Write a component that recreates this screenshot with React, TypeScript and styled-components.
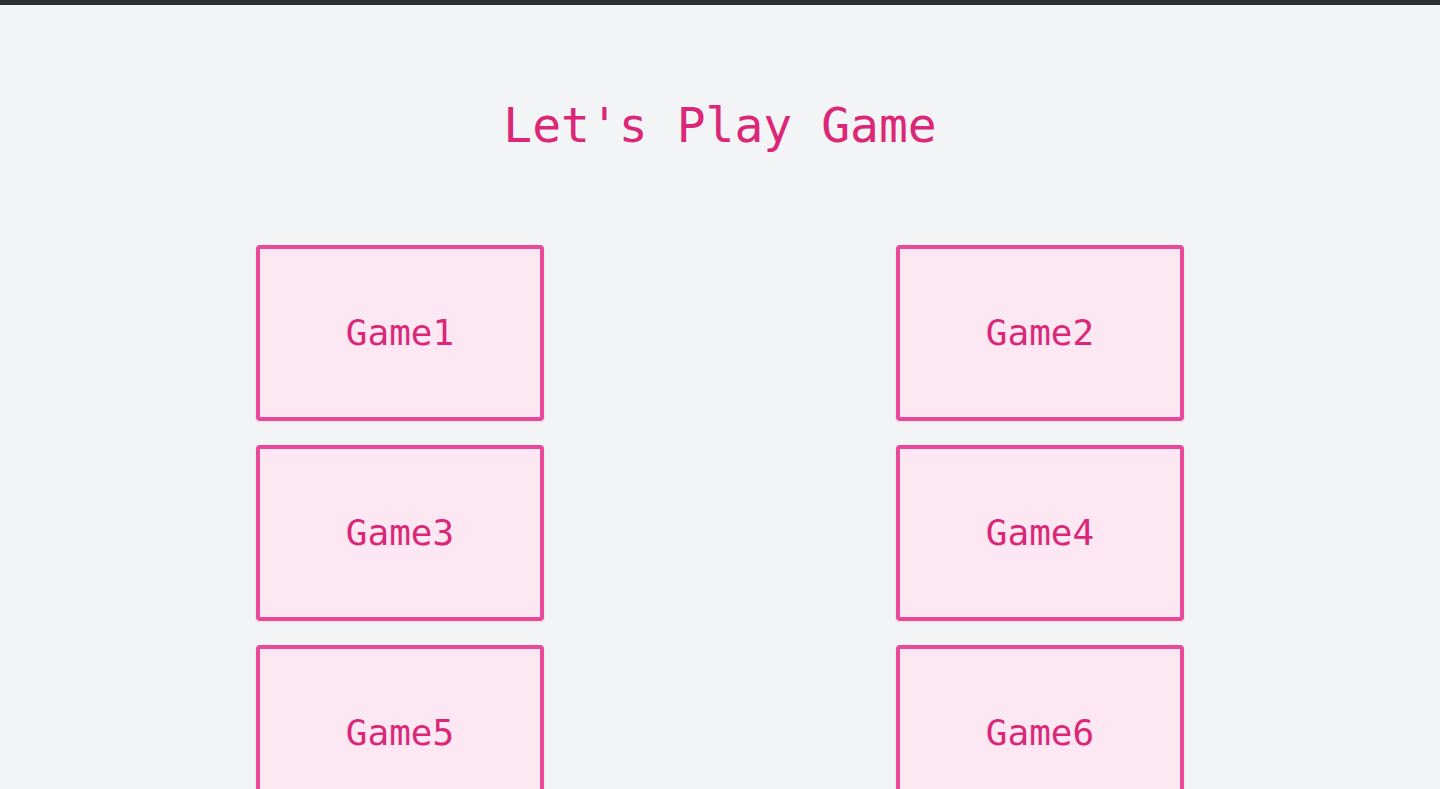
import { FC } from "react";
import styled, { createGlobalStyle } from "styled-components";

const GlobalStyle = createGlobalStyle`
  html, body {
    margin: 0;
    padding: 0;
    background-color: #ffffff;
  }
  * {
    box-sizing: border-box;
  }
`;

const Page = styled.div`
  margin-right: 5px;
  min-height: 100vh;
  background-color: #f3f4f6;
  font-family: "DejaVu Sans Mono", "Liberation Mono", monospace;
  overflow: hidden;
`;

const TopBar = styled.div`
  height: 5px;
  background-color: #2f2f31;
`;

const Title = styled.h1`
  margin: 96px 0 0;
  text-align: center;
  font-size: 48px;
  line-height: 48px;
  font-weight: 400;
  color: #db2777;
`;

const GameGrid = styled.div`
  max-width: 1280px;
  margin: 96px auto 0;
  display: grid;
  grid-template-columns: repeat(2, 1fr);
  row-gap: 24px;
  justify-items: center;
`;

const GameCard = styled.button`
  width: 288px;
  height: 176px;
  display: flex;
  align-items: center;
  justify-content: center;
  background-color: #fce7f3;
  border: 4px solid #ec4899;
  border-radius: 4px;
  box-shadow: 0 1px 3px rgba(0, 0, 0, 0.08);
  color: #db2777;
  font-family: inherit;
  font-size: 36px;
  line-height: 40px;
  padding: 0;
  cursor: pointer;
  &:hover {
    background-color: #fbcfe8;
  }
`;

const games = ["Game1", "Game2", "Game3", "Game4", "Game5", "Game6"];

const App: FC = () => {
  return (
    <>
      <GlobalStyle />
      <Page>
        <TopBar />
        <Title>Let's Play Game</Title>
        <GameGrid>
          {games.map((game) => (
            <GameCard key={game}>{game}</GameCard>
          ))}
        </GameGrid>
      </Page>
    </>
  );
};

export default App;
